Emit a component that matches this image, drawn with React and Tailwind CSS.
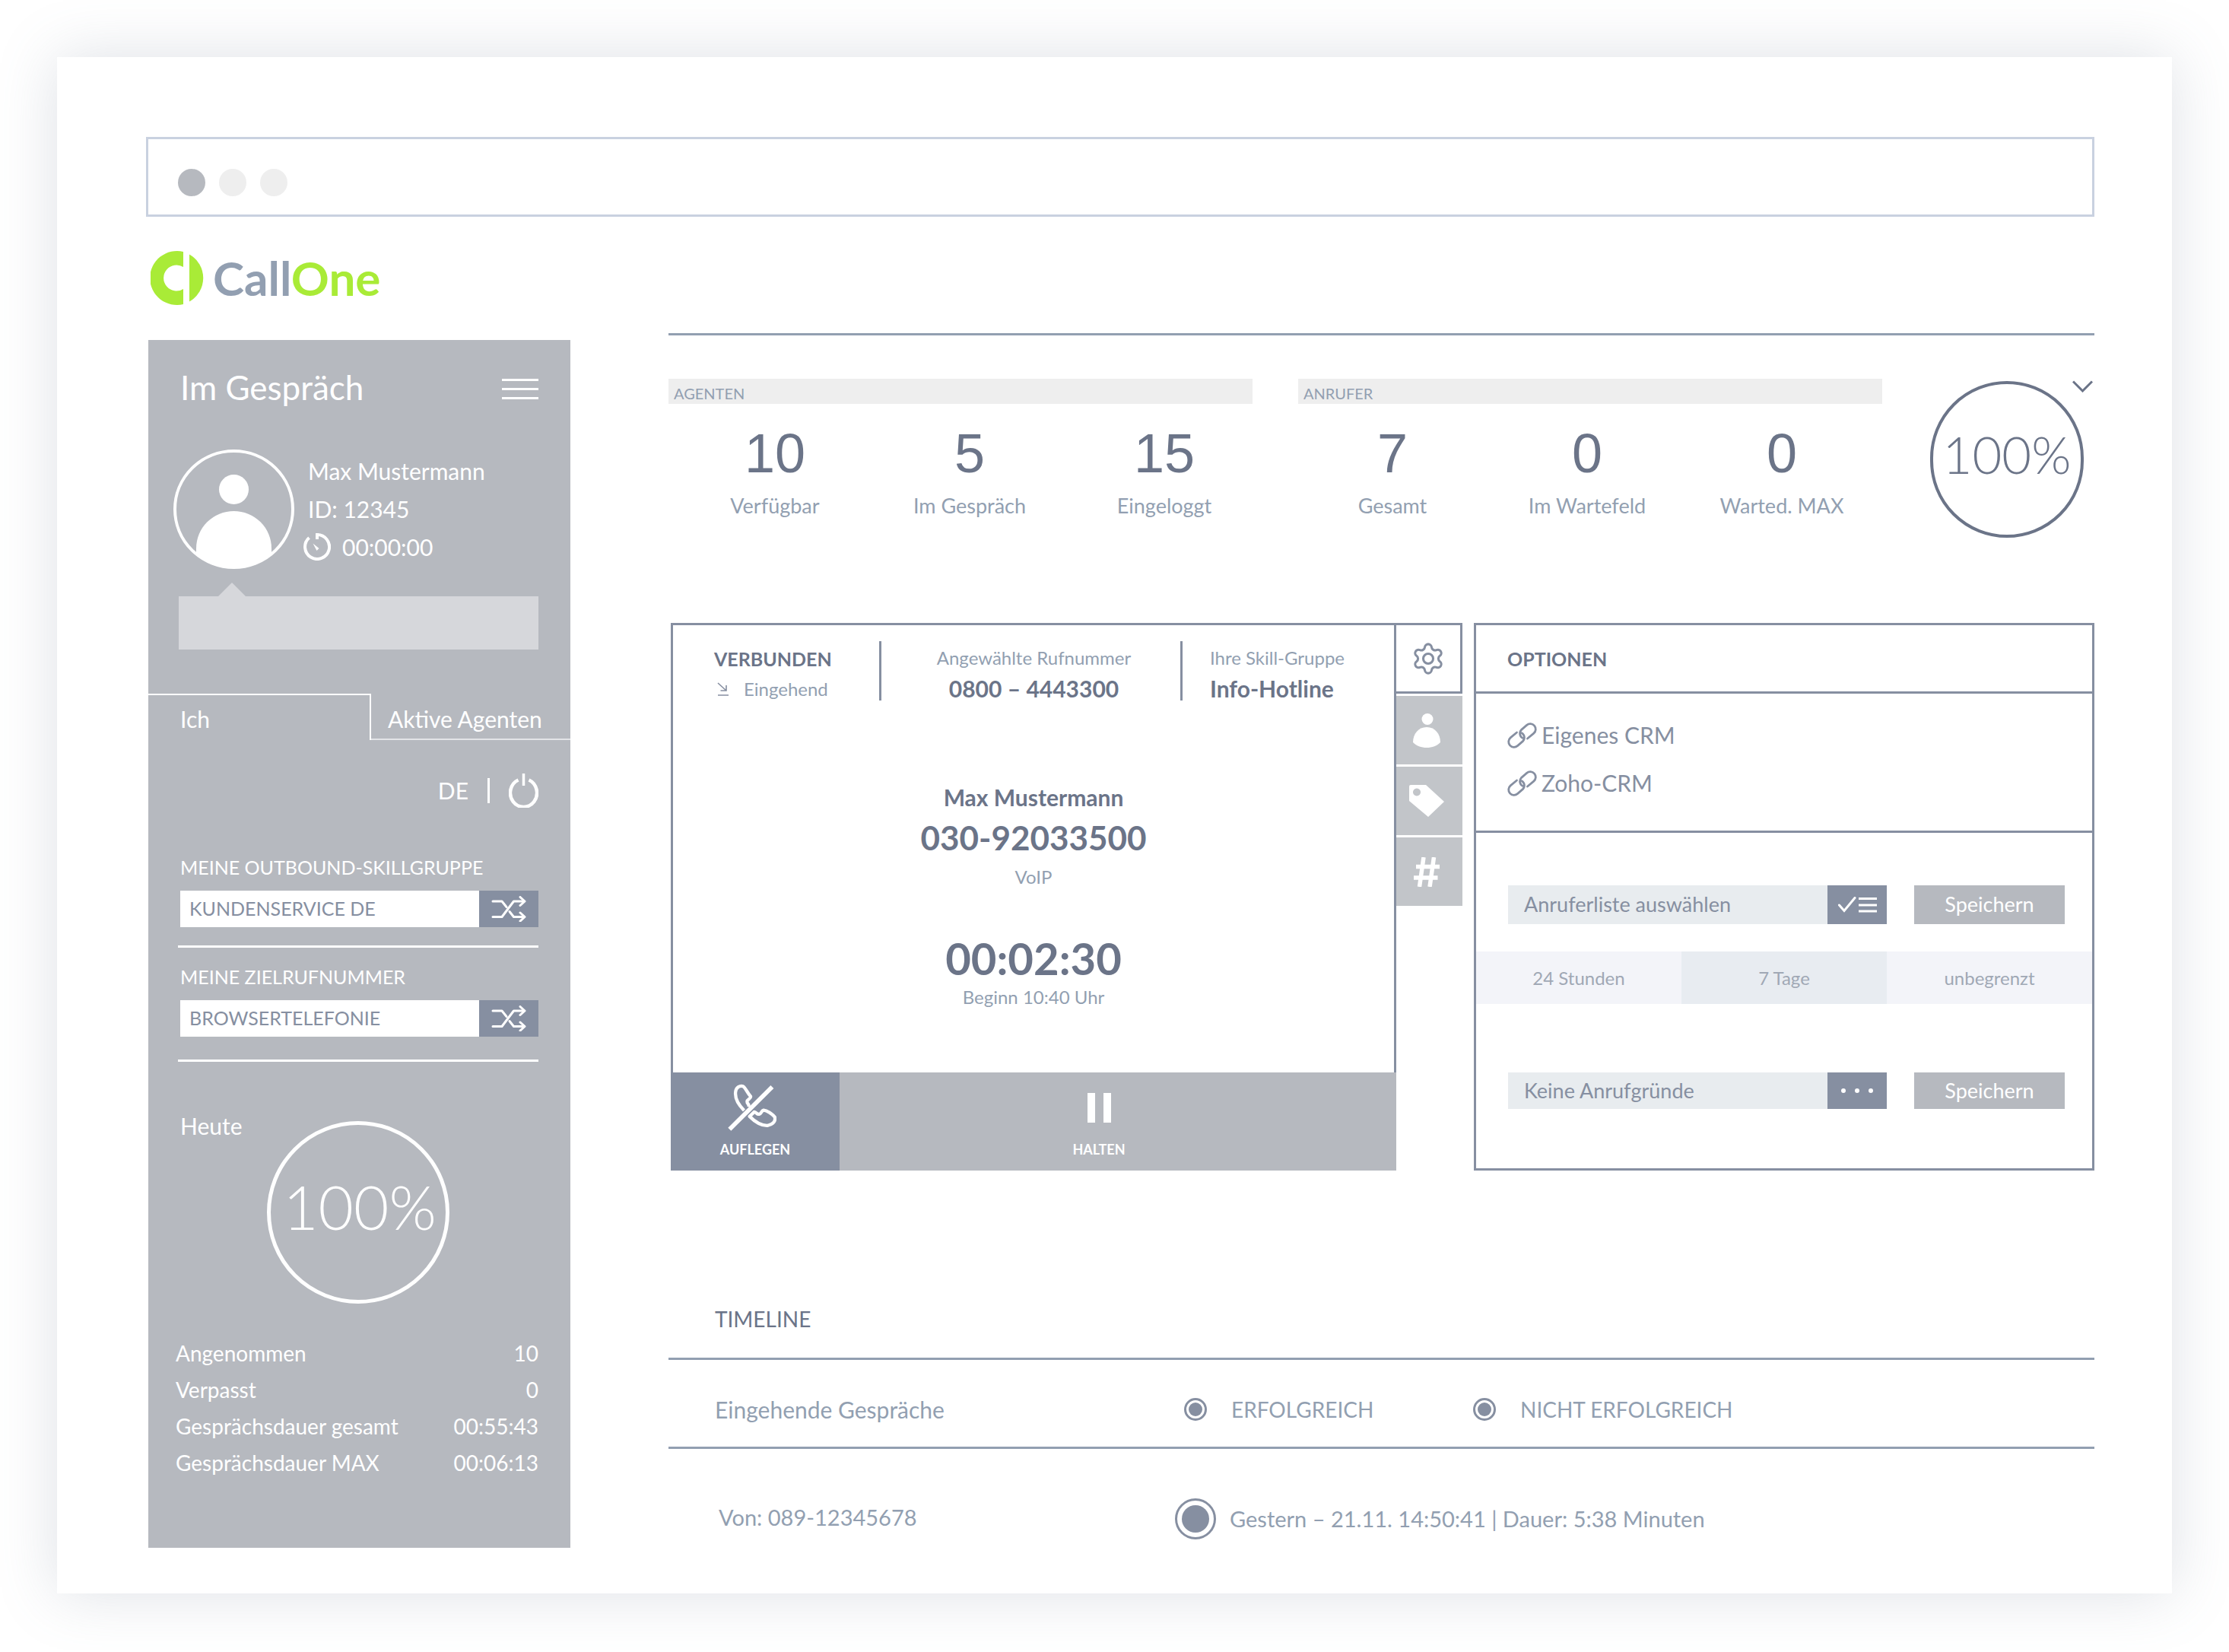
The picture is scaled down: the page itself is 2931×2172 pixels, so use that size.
import React from "react";

const LATO = "font-['Lato','Open_Sans',sans-serif]";

/* ---------- Icons ---------- */

function LogoMark() {
  return (
    <svg className="h-[71px] w-[70px]" viewBox="0 0 70 71" aria-hidden="true">
      <path
        fill="#a9eb37"
        d="M43 1 A35.5 35.5 0 1 0 43 70 V50 A17 17 0 1 1 43 21 Z"
      />
      <path fill="#a9eb37" d="M51 4.5 A35.5 35.5 0 0 1 51 66.5 Z" />
    </svg>
  );
}

function AvatarIcon() {
  return (
    <svg className="h-[157px] w-[159px] shrink-0" viewBox="0 0 159 157" aria-hidden="true">
      <defs>
        <clipPath id="avatar-clip">
          <circle cx="79.5" cy="78.5" r="77" />
        </clipPath>
      </defs>
      <ellipse cx="79.5" cy="78.5" rx="77.5" ry="76.5" fill="none" stroke="#fff" strokeWidth="4" />
      <circle cx="79.5" cy="52.5" r="19.5" fill="#fff" />
      <path
        clipPath="url(#avatar-clip)"
        fill="#fff"
        d="M30 157 V130 A49.5 49 0 0 1 129 130 V157 Z"
      />
    </svg>
  );
}

function TimerIcon() {
  return (
    <svg className="h-[36px] w-[36px] shrink-0" viewBox="0 0 36 36" aria-hidden="true">
      <path d="M18 2 A16 16 0 1 1 7.5 6" fill="none" stroke="#fff" strokeWidth="4" />
      <path d="M18 0 V8" stroke="#fff" strokeWidth="4" />
      <path d="M12.5 13.5 L20.5 20 L17.5 23 Z" fill="#fff" />
    </svg>
  );
}

function PowerIcon() {
  return (
    <svg className="h-[45px] w-[39px]" viewBox="0 0 39 45" aria-hidden="true">
      <path d="M12.5 8.5 A17.5 18.5 0 1 0 26.5 8.5" fill="none" stroke="#fff" strokeWidth="4.5" />
      <path d="M19.5 0 V16" stroke="#fff" strokeWidth="3.5" />
    </svg>
  );
}

function ShuffleIcon() {
  return (
    <svg
      className="h-[34px] w-[46px]"
      viewBox="0 0 46 34"
      fill="none"
      stroke="#fff"
      strokeWidth="3"
      strokeLinecap="round"
      strokeLinejoin="round"
      aria-hidden="true"
    >
      <path d="M2 27.5 H14 L29.5 7 H43" />
      <path d="M2 7 H14 L20 14.5" />
      <path d="M24 20.5 L29.5 27.5 H43" />
      <path d="M38 1.5 L44 7 L38 12.5" />
      <path d="M38 22 L44 27.5 L38 33" />
    </svg>
  );
}

function ArrowInIcon() {
  return (
    <svg
      className="h-[18px] w-[15px]"
      viewBox="0 0 15 18"
      fill="none"
      stroke="#868fa1"
      strokeWidth="1.6"
      aria-hidden="true"
    >
      <path d="M1 1 L12 11 M12 4 V11 H4.5 M1 17 H15" />
    </svg>
  );
}

function GearIcon() {
  return (
    <svg
      className="h-[46px] w-[46px]"
      viewBox="0 0 24 24"
      fill="none"
      stroke="#868fa1"
      strokeWidth="1.6"
      strokeLinejoin="round"
      aria-hidden="true"
    >
      <path d="M9.671 4.136a2.34 2.34 0 0 1 4.659 0 2.34 2.34 0 0 0 3.319 1.915 2.34 2.34 0 0 1 2.33 4.033 2.34 2.34 0 0 0 0 3.831 2.34 2.34 0 0 1-2.33 4.033 2.34 2.34 0 0 0-3.319 1.915 2.34 2.34 0 0 1-4.659 0 2.34 2.34 0 0 0-3.32-1.915 2.34 2.34 0 0 1-2.33-4.033 2.34 2.34 0 0 0 0-3.831A2.34 2.34 0 0 1 6.35 6.051a2.34 2.34 0 0 0 3.319-1.915" />
      <circle cx="12" cy="12" r="3.4" />
    </svg>
  );
}

function PersonIcon() {
  return (
    <svg className="h-[45px] w-[36px]" viewBox="0 0 36 45" fill="#fff" aria-hidden="true">
      <circle cx="19" cy="7.5" r="7.5" />
      <path d="M0 38 C0 27 7 18 18 18 S36 27 36 38 C32 42.5 25 45 18 45 S4 42.5 0 38 Z" />
    </svg>
  );
}

function TagIcon() {
  return (
    <svg className="h-[42px] w-[46px]" viewBox="0 0 46 42" aria-hidden="true">
      <path
        fill="#fff"
        fillRule="evenodd"
        d="M0 2 Q0 0 2 0 H22 L46 22 L25 42 L0 21 Z M10 4.5 a5 5 0 1 0 0.01 0 Z"
      />
    </svg>
  );
}

function HashIcon() {
  return (
    <svg className="h-[39px] w-[34px]" viewBox="0 0 34 39" stroke="#fff" strokeWidth="5.5" aria-hidden="true">
      <path d="M13 0 L7.5 39 M26.5 0 L21 39 M3 12.5 H34 M0 27 H31.5" />
    </svg>
  );
}

function HangUpIcon() {
  return (
    <svg
      className="mr-2 h-[62px] w-[64px]"
      viewBox="45 28 194 188"
      fill="none"
      stroke="#fff"
      strokeWidth="13"
      strokeLinejoin="round"
      aria-hidden="true"
    >
      <path d="M52 209 L222 40" strokeWidth="17" />
      <path d="M110 134 C88 112 73 84 76 60 C78 42 94 33 106 38 C116 43 122 64 136 78 C138 88 123 88 122 98 C121 108 132 108 128 120" />
      <path d="M132 158 C152 178 178 196 205 194 C226 190 237 175 232 160 C222 147 200 134 188 133 C177 136 180 147 170 149 C160 151 160 141 150 140 Z" />
    </svg>
  );
}

function PauseIcon() {
  return (
    <svg className="h-[39px] w-[31px]" viewBox="0 0 31 39" fill="#fff" aria-hidden="true">
      <path d="M0 0 H10 V39 H0 Z M21 0 H31 V39 H21 Z" />
    </svg>
  );
}

function LinkIcon() {
  return (
    <svg
      className="h-[34px] w-[39px] shrink-0"
      viewBox="0 0 39 34"
      fill="none"
      stroke="#868fa1"
      strokeWidth="2.8"
      strokeLinecap="round"
      aria-hidden="true"
    >
      <path d="M12.5 13 L4.2 19.8 A7 7 0 0 0 13.4 30.6 L20.6 24.4 A7 7 0 0 0 18.8 13.6" />
      <path d="M26.5 21 L34.8 14.2 A7 7 0 0 0 25.6 3.4 L18.4 9.6 A7 7 0 0 0 20.2 20.4" />
    </svg>
  );
}

function CheckListIcon() {
  return (
    <svg
      className="h-[22px] w-[51px]"
      viewBox="0 0 51 22"
      fill="none"
      stroke="#fff"
      strokeWidth="3"
      aria-hidden="true"
    >
      <path d="M1.5 11 L8 18.5 L22 1.5" strokeLinecap="round" />
      <path d="M27 2.5 H51 M27 11 H51 M27 19 H51" />
    </svg>
  );
}

function DotsIcon() {
  return (
    <svg className="h-[6px] w-[42px]" viewBox="0 0 42 6" fill="#fff" aria-hidden="true">
      <circle cx="3" cy="3" r="3" />
      <circle cx="21" cy="3" r="3" />
      <circle cx="39" cy="3" r="3" />
    </svg>
  );
}

function ChevronIcon() {
  return (
    <svg
      className="h-[16px] w-[27px]"
      viewBox="0 0 27 16"
      fill="none"
      stroke="#6b7488"
      strokeWidth="3"
      aria-hidden="true"
    >
      <path d="M1 1.5 L13.5 14 L26 1.5" />
    </svg>
  );
}

/* ---------- Sidebar ---------- */

function SkillField({ id, label, value }) {
  return (
    <div className="pl-[3px]">
      <label htmlFor={id} className="block text-[25px] leading-9">
        {label}
      </label>
      <div className="mt-[13px] flex h-12">
        <input
          id={id}
          type="text"
          defaultValue={value}
          className="min-w-0 flex-1 bg-white pl-3 text-[25px] text-[#868fa1] outline-none"
        />
        <button
          type="button"
          aria-label={`${label} wechseln`}
          className="flex w-[78px] items-center justify-center bg-[#868fa1]"
        >
          <ShuffleIcon />
        </button>
      </div>
    </div>
  );
}

const TODAY = [
  ["Angenommen", "10"],
  ["Verpasst", "0"],
  ["Gesprächsdauer gesamt", "00:55:43"],
  ["Gesprächsdauer MAX", "00:06:13"],
];

function Sidebar() {
  return (
    <aside className="bg-[#b6b9bf] pb-[88px] text-white">
      <header className="flex items-center justify-between px-[42px] pt-[38px]">
        <h1 className="text-[44px] leading-[48px]">Im Gespräch</h1>
        <button type="button" aria-label="Menü" className="flex w-12 flex-col gap-[9px] pt-1">
          <span className="h-[3px] w-full bg-white" />
          <span className="h-[3px] w-full bg-white" />
          <span className="h-[3px] w-full bg-white" />
        </button>
      </header>

      <section className="mt-[58px] flex gap-3 pl-[33px]">
        <AvatarIcon />
        <div className="pt-[3px] text-[30px] leading-[50px]">
          <p className="pl-[6px]">Max Mustermann</p>
          <p className="pl-[6px]">ID: 12345</p>
          <p className="flex items-center gap-[15px]">
            <TimerIcon />
            00:00:00
          </p>
        </div>
      </section>

      <div className="mt-[18px] pr-[42px] pl-10">
        <svg className="ml-[52px] block h-[18px] w-[36px]" viewBox="0 0 36 18" aria-hidden="true">
          <path d="M0 18 L18 0 L36 18 Z" fill="#d6d7db" />
        </svg>
        <div className="h-[70px] bg-[#d6d7db]" />
      </div>

      <div role="tablist" className="mt-[58px] flex h-[61px] text-[30px]">
        <button
          type="button"
          role="tab"
          aria-selected="true"
          className="w-[293px] border-t-2 border-r-2 border-white pt-1 pl-[42px] text-left"
        >
          Ich
        </button>
        <button
          type="button"
          role="tab"
          aria-selected="false"
          className="flex-1 border-b-2 border-[#e3e4e7] pt-2 pl-[22px] text-left"
        >
          Aktive Agenten
        </button>
      </div>

      <div className="mt-11 flex items-center justify-end gap-[25px] pr-[42px] text-[30px]">
        <button type="button">DE</button>
        <span className="h-[33px] w-[3px] bg-white" />
        <button type="button" aria-label="Abmelden">
          <PowerIcon />
        </button>
      </div>

      <form className="mt-[60px] pr-[42px] pl-[39px]">
        <div className="border-b-[3px] border-white pb-6">
          <SkillField id="skill" label="MEINE OUTBOUND-SKILLGRUPPE" value="KUNDENSERVICE DE" />
        </div>
        <div className="border-b-[3px] border-white pt-5 pb-[30px]">
          <SkillField id="target" label="MEINE ZIELRUFNUMMER" value="BROWSERTELEFONIE" />
        </div>
      </form>

      <section className="mt-[66px] flex pl-[42px]">
        <h2 className="w-[114px] text-[30px] leading-9">Heute</h2>
        <div className="mt-3 flex size-[240px] items-center justify-center rounded-full border-[5px] border-white pb-4 pl-1 text-[80px] leading-none font-light">
          100%
        </div>
      </section>

      <dl className="mt-[41px] pr-[42px] pl-[36px] text-[28px] leading-[48px]">
        {TODAY.map(([name, value]) => (
          <div key={name} className="flex justify-between">
            <dt>{name}</dt>
            <dd>{value}</dd>
          </div>
        ))}
      </dl>
    </aside>
  );
}

/* ---------- Statistics ---------- */

function StatGroup({ title, items, shift }) {
  return (
    <section className="flex-1">
      <h2 className="h-[33px] bg-[#eeeeee] pt-[5px] pl-[7px] text-[20px] leading-7 text-[#929fb1]">{title}</h2>
      <dl className={`mt-[25px] grid grid-cols-3 ${shift}`}>
        {items.map(([name, value]) => (
          <div key={name} className="flex flex-col-reverse items-center">
            <dt className="mt-[11px] text-[27px] leading-9 text-[#929fb1]">{name}</dt>
            <dd className="font-['Liberation_Sans',Arial,sans-serif] text-[72px] leading-[80px] text-[#6b7488]">
              {value}
            </dd>
          </div>
        ))}
      </dl>
    </section>
  );
}

function Stats() {
  return (
    <div className="flex gap-[60px] pt-[57px]">
      <StatGroup
        title="AGENTEN"
        shift="ml-3 -mr-3"
        items={[
          ["Verfügbar", "10"],
          ["Im Gespräch", "5"],
          ["Eingeloggt", "15"],
        ]}
      />
      <StatGroup
        title="ANRUFER"
        shift="-ml-1 mr-1"
        items={[
          ["Gesamt", "7"],
          ["Im Wartefeld", "0"],
          ["Warted. MAX", "0"],
        ]}
      />
      <div className="relative w-[219px] pt-[3px] pl-[3px]">
        <div className="flex h-[206px] w-[202px] items-center justify-center rounded-full border-4 border-[#6b7488] pb-[14px] text-[67px] leading-none font-light text-[#6b7488]">
          100%
        </div>
        <button type="button" aria-label="Ausklappen" className="absolute top-0.5 right-0.5 flex">
          <ChevronIcon />
        </button>
      </div>
    </div>
  );
}

/* ---------- Call ---------- */

function CallCard() {
  return (
    <section className="flex flex-[954] flex-col">
      <div className="flex flex-1 flex-col border-3 border-b-0 border-[#868fa1] pt-[21px] text-center text-[#929fb1]">
        <header className="flex h-[78px] text-[24px] leading-10">
          <div className="flex-[217] pt-[3px] pl-[54px] text-left">
            <h2 className="text-[25px] font-bold text-[#6b7488]">VERBUNDEN</h2>
            <p className="flex items-center gap-5 pl-1">
              <ArrowInIcon />
              Eingehend
            </p>
          </div>
          <div className="flex-[385] border-x-3 border-[#868fa1] pt-[2px] pl-2">
            <p>Angewählte Rufnummer</p>
            <p className="text-[30px] font-bold text-[#6b7488]">0800 – 4443300</p>
          </div>
          <div className="flex-[242] pt-[2px] pl-9 text-left">
            <p>Ihre Skill-Gruppe</p>
            <p className="text-[30px] font-bold text-[#6b7488]">Info-Hotline</p>
          </div>
        </header>
        <p className="mt-[109px] text-[30px] leading-9 font-bold text-[#6b7488]">Max Mustermann</p>
        <p className="mt-2 text-[44px] leading-[54px] font-bold text-[#6b7488]">030-92033500</p>
        <p className="mt-[7px] text-[24px] leading-9">VoIP</p>
        <p className="mt-14 text-[58px] leading-[66px] font-bold text-[#6b7488]">00:02:30</p>
        <p className="text-[24px] leading-9">Beginn 10:40 Uhr</p>
      </div>
      <div className="flex h-[129px] text-[18px] leading-6 font-bold text-white">
        <button type="button" className="flex w-[222px] flex-col items-center bg-[#868fa1] pt-[15px]">
          <HangUpIcon />
          <span className="mt-3">AUFLEGEN</span>
        </button>
        <button type="button" className="flex flex-1 flex-col items-center bg-[#b6b9bf] pt-[27px] pr-[50px]">
          <PauseIcon />
          <span className="mt-[23px]">HALTEN</span>
        </button>
      </div>
    </section>
  );
}

const SIDE_TABS = [
  ["Kontakt", PersonIcon],
  ["Tags", TagIcon],
  ["Nummern", HashIcon],
];

function SideTabs() {
  return (
    <div role="tablist" aria-orientation="vertical" className="flex w-[87px] flex-col gap-[3px]">
      <button
        type="button"
        role="tab"
        aria-selected="true"
        aria-label="Einstellungen"
        className="flex h-[93px] items-center justify-center border-3 border-l-0 border-[#868fa1]"
      >
        <GearIcon />
      </button>
      {SIDE_TABS.map(([name, Icon]) => (
        <button
          key={name}
          type="button"
          role="tab"
          aria-selected="false"
          aria-label={name}
          className="flex h-[90px] items-center justify-center bg-[#c2c5c9] pr-2"
        >
          <Icon />
        </button>
      ))}
    </div>
  );
}

function OptionRow({ label, children, size }) {
  return (
    <div className={`flex gap-9 pr-9 pl-[42px] text-[27px] ${size}`}>
      <div className="flex min-w-0 flex-1">
        <input
          type="text"
          aria-label={label}
          defaultValue={label}
          className="min-w-0 flex-1 bg-[#e8ecef] pl-[21px] text-[#868fa1] outline-none"
        />
        <button
          type="button"
          aria-label={`${label} öffnen`}
          className="flex w-[78px] items-center justify-center bg-[#868fa1]"
        >
          {children}
        </button>
      </div>
      <button type="button" className="w-[198px] bg-[#b6b9bf] text-white">
        Speichern
      </button>
    </div>
  );
}

function Options() {
  return (
    <section className="ml-[15px] flex-[810] border-3 border-[#868fa1]">
      <h2 className="flex h-[87px] items-center pt-0.5 pl-[41px] text-[25px] font-bold text-[#6b7488]">OPTIONEN</h2>
      <ul className="h-[186px] border-y-3 border-[#868fa1] pt-[23px] pl-[41px] text-[30px] leading-[63px] text-[#868fa1]">
        {["Eigenes CRM", "Zoho-CRM"].map((name) => (
          <li key={name}>
            <a href="#" className="flex items-center gap-[6px]">
              <LinkIcon />
              {name}
            </a>
          </li>
        ))}
      </ul>
      <div className="pt-[69px] pb-[78px]">
        <OptionRow label="Anruferliste auswählen" size="h-[51px]">
          <CheckListIcon />
        </OptionRow>
        <div className="mt-9 mb-[90px] grid h-[69px] grid-cols-3 text-[24px] text-[#a0a8b5]">
          <button type="button" className="bg-[#f3f4f9]">24 Stunden</button>
          <button type="button" className="bg-[#e8ecf1]">7 Tage</button>
          <button type="button" className="bg-[#f3f4f9]">unbegrenzt</button>
        </div>
        <OptionRow label="Keine Anrufgründe" size="h-12">
          <DotsIcon />
        </OptionRow>
      </div>
    </section>
  );
}

/* ---------- Timeline ---------- */

function SmallRadio({ name, label }) {
  return (
    <label className="flex items-center text-[28px]">
      <span className="flex w-[54px] justify-center">
        <input
          type="radio"
          name={name}
          defaultChecked
          className="size-[30px] appearance-none rounded-full border-3 border-[#868fa1] bg-[#868fa1] bg-clip-content p-[3px]"
        />
      </span>
      <span className="pl-5">{label}</span>
    </label>
  );
}

function Timeline() {
  return (
    <section className="mt-[177px] text-[30px] text-[#929fb1]">
      <h2 className="border-b-3 border-[#929fb1] pb-[33px] pl-[61px] text-[28px] leading-9 text-[#6b7488]">
        TIMELINE
      </h2>
      <div className="grid h-[117px] grid-cols-[666fr_380fr_829fr] items-center border-b-3 border-[#929fb1] pt-4">
        <p className="pl-[61px]">Eingehende Gespräche</p>
        <SmallRadio name="success" label="ERFOLGREICH" />
        <SmallRadio name="failure" label="NICHT ERFOLGREICH" />
      </div>
      <div className="grid grid-cols-[666fr_1209fr] items-center pt-[65px] text-[29px]">
        <p className="pb-1 pl-[66px]">Von: 089-12345678</p>
        <label className="flex items-center gap-[18px]">
          <input
            type="radio"
            name="call"
            defaultChecked
            className="size-[54px] appearance-none rounded-full border-3 border-[#868fa1] bg-[#868fa1] bg-clip-content p-[6px]"
          />
          Gestern – 21.11. 14:50:41 | Dauer: 5:38 Minuten
        </label>
      </div>
    </section>
  );
}

export default function App() {
  return (
    <div className={`bg-white p-[75px] ${LATO}`}>
      <main className="bg-white pt-[105px] pr-[102px] pb-[60px] pl-[117px] shadow-[0_0_75px_rgba(105,120,140,0.22)]">
        <div className="flex h-[105px] gap-[18px] border-3 border-[#c9d1e0] pt-[39px] pl-[39px]">
          <span className="size-9 rounded-full bg-[#b6b9bf]" />
          <span className="size-9 rounded-full bg-[#eeeeee]" />
          <span className="size-9 rounded-full bg-[#eeeeee]" />
        </div>

        <div className="flex gap-[129px] pl-[3px]">
          <div className="w-[555px] shrink-0 pt-[45px]">
            <a href="#" className="mb-[46px] flex items-center gap-3 pl-[3px]" aria-label="CallOne">
              <LogoMark />
              <span className="text-[62px] leading-[71px] font-bold text-[#929fb1]">
                Call<span className="text-[#a9eb37]">One</span>
              </span>
            </a>
            <Sidebar />
          </div>

          <div className="min-w-0 flex-1 pt-[153px]">
            <div className="border-t-3 border-[#929fb1]">
              <Stats />
            </div>
            <div className="mt-[112px] flex pl-[3px]">
              <CallCard />
              <SideTabs />
              <Options />
            </div>
            <Timeline />
          </div>
        </div>
      </main>
    </div>
  );
}
